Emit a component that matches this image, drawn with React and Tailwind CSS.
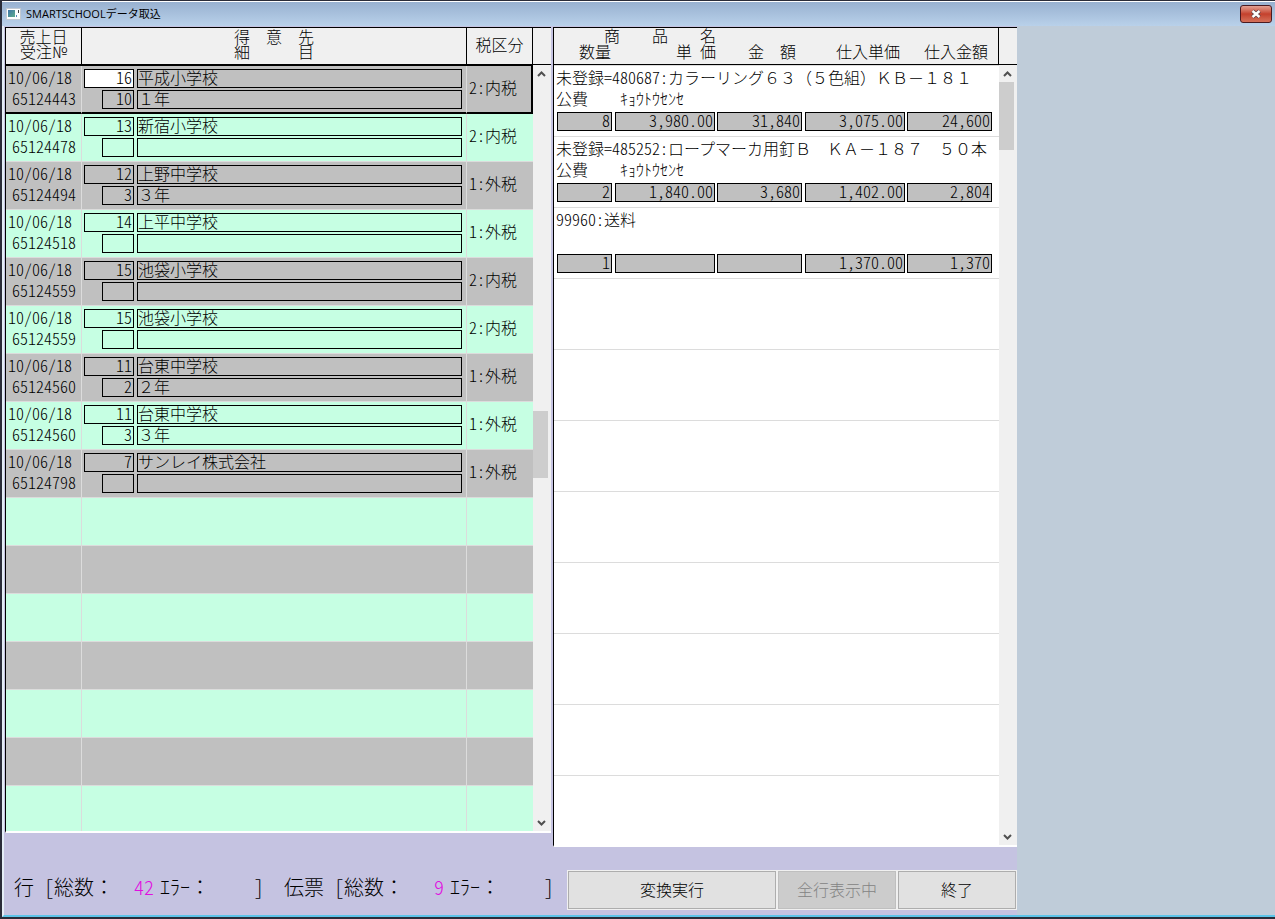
import React, { useState } from "react";

const orders = [
  { date: "10/06/18", no: "65124443", code: "16", name: "平成小学校", sub: "10", detail: "１年", tax: "2:内税" },
  { date: "10/06/18", no: "65124478", code: "13", name: "新宿小学校", sub: "", detail: "", tax: "2:内税" },
  { date: "10/06/18", no: "65124494", code: "12", name: "上野中学校", sub: "3", detail: "３年", tax: "1:外税" },
  { date: "10/06/18", no: "65124518", code: "14", name: "上平中学校", sub: "", detail: "", tax: "1:外税" },
  { date: "10/06/18", no: "65124559", code: "15", name: "池袋小学校", sub: "", detail: "", tax: "2:内税" },
  { date: "10/06/18", no: "65124559", code: "15", name: "池袋小学校", sub: "", detail: "", tax: "2:内税" },
  { date: "10/06/18", no: "65124560", code: "11", name: "台東中学校", sub: "2", detail: "２年", tax: "1:外税" },
  { date: "10/06/18", no: "65124560", code: "11", name: "台東中学校", sub: "3", detail: "３年", tax: "1:外税" },
  { date: "10/06/18", no: "65124798", code: "7", name: "サンレイ株式会社", sub: "", detail: "", tax: "1:外税" },
];

const items = [
  {
    code: "未登録=480687:",
    name: "カラーリング６３（５色組）ＫＢ－１８１",
    note: "公費　　ｷｮｳﾄｳｾﾝｾ",
    values: ["8", "3,980.00", "31,840", "3,075.00", "24,600"],
  },
  {
    code: "未登録=485252:",
    name: "ロープマーカ用釘Ｂ　ＫＡ－１８７　５０本",
    note: "公費　　ｷｮｳﾄｳｾﾝｾ",
    values: ["2", "1,840.00", "3,680", "1,402.00", "2,804"],
  },
  { code: "99960:", name: "送料", note: "", values: ["1", "", "", "1,370.00", "1,370"] },
];

const valueLabels = ["数量", "単価", "金額", "仕入単価", "仕入金額"];
const valuePads = ["pl-[3px] pr-[2px]", "px-px", "pl-px pr-[2px]", "pl-px pr-px", "pl-px pr-[7px]"];

const emptyOrders = Array.from({ length: 7 });
const emptyItems = Array.from({ length: 8 });

// half-width digits and signs, so they line up with the kanji grid
const half = "[font-feature-settings:'hwid']";

function Field({ label, value, className = "" }) {
  return (
    <input
      aria-label={label}
      defaultValue={value}
      className={`block h-[19px] min-w-0 rounded-none border border-black p-0 pr-px pb-1 leading-4 outline-none ${className}`}
    />
  );
}

function Chevron({ down }) {
  return (
    <svg width="9" height="6" viewBox="0 0 9 6" fill="none" stroke="#505050" strokeWidth="2">
      <path d={down ? "M1 1l3.5 3.5L8 1" : "M1 5l3.5-3.5L8 5"} />
    </svg>
  );
}

// before / after share out the free track on either side of the thumb
function ScrollBar({ before, thumb, after }) {
  return (
    <div className="flex w-full flex-1 flex-col bg-[#f0f0f0]">
      <button type="button" aria-label="上へ" className="flex h-[17px] w-[17px] shrink-0 items-center justify-center">
        <Chevron />
      </button>
      <div className="flex flex-1 flex-col">
        <div className={before} />
        <div className={`w-[15px] bg-[#cdcdcd] ${thumb}`} />
        <div className={after} />
      </div>
      <button type="button" aria-label="下へ" className="flex h-[17px] w-[17px] shrink-0 items-center justify-center">
        <Chevron down />
      </button>
    </div>
  );
}

function TitleBar() {
  return (
    <header className="flex h-[25px] shrink-0 items-center border-t border-white bg-gradient-to-b from-[#98b1d0] to-[#b9d1ea] pl-1 pr-[3px]">
      <svg width="15" height="12" viewBox="0 0 15 12" className="shrink-0">
        <defs>
          <linearGradient id="appIcon" x1="0" y1="0" x2="1" y2="1">
            <stop offset="0" stopColor="#3f74a8" />
            <stop offset="1" stopColor="#5fae8c" />
          </linearGradient>
        </defs>
        <rect x="0.5" y="0.5" width="14" height="11" fill="#fff" stroke="#c3cad2" />
        <rect x="2" y="2" width="7" height="7" fill="url(#appIcon)" />
        <rect x="10" y="7" width="1" height="2" fill="#5a8ac0" />
        <rect x="12" y="2" width="1" height="3" fill="#444" />
      </svg>
      <h1 className="ml-[5px] flex-1 font-['Open_Sans','Noto_Sans_CJK_JP',sans-serif] text-[11px] font-normal text-black">
        SMARTSCHOOLデータ取込
      </h1>
      <button
        type="button"
        aria-label="閉じる"
        className="flex h-[18px] w-8 items-center justify-center rounded-[3px] border border-[#4a1a20] bg-gradient-to-b from-[#e2a093] via-[#c4402c] to-[#d4705a]"
      >
        <svg width="12" height="10" viewBox="0 0 12 10" fill="none">
          <path d="M2.5 2l7 6M9.5 2l-7 6" stroke="#5a4048" strokeWidth="4" />
          <path d="M2.5 2l7 6M9.5 2l-7 6" stroke="#fff" strokeWidth="2.4" />
        </svg>
      </button>
    </header>
  );
}

const headCell = "border-b-2 border-r border-black bg-[#f0f0f0] p-0 pb-1 font-light leading-[15px] whitespace-pre";

function OrderList() {
  const [selected, setSelected] = useState(0);

  return (
    <section className="mb-[14px] flex min-w-0 flex-1 overflow-hidden border-b-2 border-l border-t border-b-white border-l-black border-t-black">
      <table className="w-full table-fixed border-separate border-spacing-0 self-start">
        <colgroup>
          <col className="w-[76px]" />
          <col />
          <col className="w-[66px]" />
        </colgroup>
        <thead>
          <tr className="h-[38px]">
            <th className={headCell}>売上日<br />受注№</th>
            <th className={headCell}>得　意　先<br />細　　　目</th>
            <th className={headCell}>税区分</th>
          </tr>
        </thead>
        <tbody>
          {orders.map((o, i) => {
            const active = i === selected;
            const line = active ? "border-b-2 border-b-black" : "border-b border-b-[#dcdcdc]";
            return (
              <tr
                key={i}
                onClick={() => setSelected(i)}
                className={`h-12 ${i % 2 ? "bg-[#c6ffe3]" : "bg-[#c0c0c0]"}`}
              >
                <td className={`border-r border-r-[#dcdcdc] p-0 pr-[5px] pt-px align-top text-right leading-[21px] ${half} ${line}`}>
                  <div className="pr-1">{o.date}</div>
                  <div>{o.no}</div>
                </td>
                <td className={`border-r border-r-[#dcdcdc] p-0 align-top ${line}`}>
                  <div className="flex flex-col gap-[2px] pl-[2px] pr-1 pt-[3px]">
                    <div className="flex gap-[3px]">
                      <Field
                        label="得意先コード"
                        value={o.code}
                        className={`w-[50px] text-right ${half} ${active ? "bg-white" : "bg-transparent"}`}
                      />
                      <Field label="得意先" value={o.name} className="flex-1 bg-transparent" />
                    </div>
                    <div className="flex gap-[3px] pl-[18px]">
                      <Field label="細目コード" value={o.sub} className={`w-8 bg-transparent text-right ${half}`} />
                      <Field label="細目" value={o.detail} className="flex-1 bg-transparent" />
                    </div>
                  </div>
                </td>
                <td className={`p-0 pb-[5px] pl-[2px] ${half} ${line} ${active ? "border-r-2 border-r-black" : ""}`}>
                  {o.tax}
                </td>
              </tr>
            );
          })}
          {emptyOrders.map((_, i) => (
            <tr key={i} className={`h-12 ${i % 2 ? "bg-[#c0c0c0]" : "bg-[#c6ffe3]"}`}>
              <td className="border-b border-r border-[#dcdcdc] p-0" />
              <td className="border-b border-r border-[#dcdcdc] p-0" />
              <td className="border-b border-[#dcdcdc] p-0" />
            </tr>
          ))}
        </tbody>
      </table>
      <div className="flex w-[18px] shrink-0 flex-col">
        <div className="h-[37px] shrink-0 border-b border-black bg-[#f0f0f0]" />
        <ScrollBar before="grow-[329]" thumb="h-[67px]" after="grow-[336]" />
      </div>
    </section>
  );
}

const itemHead = "border-b border-black p-0 text-right align-top font-light leading-[15px] whitespace-pre";

function ItemList() {
  return (
    <section className="flex w-[464px] shrink-0 overflow-hidden border-b-2 border-l border-t border-b-white border-l-black border-t-black bg-white">
      <table className="w-full table-fixed border-separate border-spacing-0 self-start">
        <colgroup>
          <col className="w-[60px]" />
          <col className="w-[102px]" />
          <col className="w-[88px]" />
          <col className="w-[102px]" />
          <col />
        </colgroup>
        <thead className="bg-[#f0f0f0]">
          <tr className="h-4">
            <th
              colSpan={5}
              className="border-r border-black p-0 pl-[50px] text-left align-top font-light leading-[15px] whitespace-pre"
            >
              商　　品　　名
            </th>
          </tr>
          <tr className="h-[21px]">
            <th className={`pr-[3px] ${itemHead}`}>数量</th>
            <th className={`${half} ${itemHead}`}>単 価</th>
            <th className={`pr-2 ${itemHead}`}>金　額</th>
            <th className={`pr-[6px] ${itemHead}`}>仕入単価</th>
            <th className={`border-r pr-[10px] ${itemHead}`}>仕入金額</th>
          </tr>
        </thead>
        {items.map((item) => (
          <tbody key={item.code}>
            <tr className="h-[47px]">
              <td
                colSpan={5}
                className="border-t border-[#dcdcdc] p-0 pl-[2px] pt-px align-top leading-[21px] whitespace-nowrap"
              >
                <div>
                  <span className={half}>{item.code}</span>
                  {item.name}
                </div>
                <div>{item.note}</div>
              </td>
            </tr>
            <tr className="h-6">
              {item.values.map((v, i) => (
                <td key={i} className={`p-0 align-top ${valuePads[i]}`}>
                  <Field label={valueLabels[i]} value={v} className={`w-full bg-[#c0c0c0] text-right ${half}`} />
                </td>
              ))}
            </tr>
          </tbody>
        ))}
        <tbody>
          {emptyItems.map((_, i) => (
            <tr key={i} className="h-[71px]">
              <td colSpan={5} className="border-t border-[#dcdcdc] p-0" />
            </tr>
          ))}
        </tbody>
      </table>
      <div className="flex w-[18px] shrink-0 flex-col">
        <div className="h-[37px] shrink-0 border-b border-black bg-[#f0f0f0]" />
        <ScrollBar before="h-0" thumb="h-[68px]" after="grow" />
      </div>
    </section>
  );
}

function Count({ label, total }) {
  return (
    <div className="flex whitespace-pre">
      <span>{label}</span>
      <span className={half}> [</span>
      <span>総数：</span>
      <output className={`w-10 text-right text-[#e010e0] ${half}`}>{total}</output>
      <span className="ml-[6px]">ｴﾗｰ：</span>
      <output className="w-11" />
      <span className={half}>]</span>
    </div>
  );
}

const button =
  "h-[38px] border border-[#adadad] bg-[#e1e1e1] pb-[2px] outline-1 outline-[#f0f0f0] disabled:border-[#bfbfbf] disabled:bg-[#cccccc] disabled:text-[#838383]";

function Footer() {
  return (
    <footer className="flex h-[68px] shrink-0 items-start justify-between bg-[#c5c3e1] pl-[9px] pr-px pt-6">
      <div className="flex gap-5 pt-[2px] text-xl leading-7">
        <Count label="行" total="42" />
        <Count label="伝票" total="9" />
      </div>
      <div className="flex gap-[2px]">
        <button type="button" className={`w-52 ${button}`}>変換実行</button>
        <button type="button" disabled className={`w-[118px] ${button}`}>全行表示中</button>
        <button type="button" className={`w-[118px] ${button}`}>終了</button>
      </div>
    </footer>
  );
}

export default function App() {
  return (
    <div className="flex h-screen flex-col border-b-2 border-l-2 border-t border-[#2a2c38] bg-[#bfccd9] font-['Noto_Sans_CJK_JP',sans-serif] text-base font-light text-black">
      <TitleBar />
      <div className="flex min-h-0 flex-1 border-b-2 border-l-2 border-b-[#5cc4e8] border-l-[#e4edf6]">
        <main className="flex min-w-0 flex-1 flex-col bg-[#c5c3e1] pl-px">
          <div className="flex min-h-0 flex-1 gap-[2px] pt-px">
            <OrderList />
            <ItemList />
          </div>
          <Footer />
        </main>
        <div className="w-[258px] shrink-0" />
      </div>
    </div>
  );
}
